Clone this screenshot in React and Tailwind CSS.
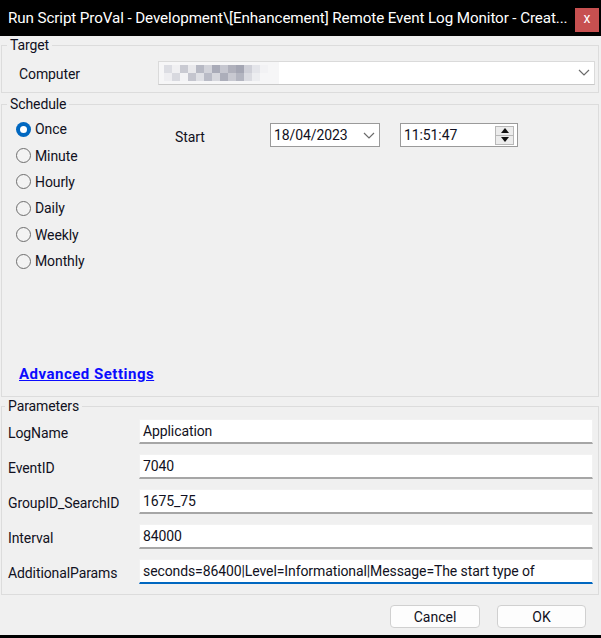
import React from 'react';

const font = { fontFamily: 'Roboto, "Liberation Sans", sans-serif' };

const mosaic = [
  ['#dcdde3', '#f0f0f2', '#c9cad2', '#e9e9ec', '#b7b9c4', '#d2d3da', '#a9abb8', '#c6c7d0', '#b0b1bc', '#a4a6b3', '#cfd0d8', '#e4e5ea', '#f2f2f4'],
  ['#eeeef1', '#d8d9df', '#f3f3f5', '#c4c5ce', '#dfe0e5', '#b9bbc6', '#d6d7dd', '#acaeba', '#c8c9d1', '#b3b5c0', '#dadbe1', '#ecedf0', '#f6f6f7'],
];

const Chevron = ({ className }) => (
  <svg width="12" height="7" viewBox="0 0 12 7" className={className}>
    <path d="M1 1 L6 6 L11 1" fill="none" stroke="#6b6b6b" strokeWidth="1.2" />
  </svg>
);

const Radio = ({ checked, label }) => (
  <div className="flex items-center h-[26.4px]">
    {checked ? (
      <div className="w-[15px] h-[15px] rounded-full bg-[#0067c0] flex items-center justify-center">
        <div className="w-[7px] h-[7px] rounded-full bg-white" />
      </div>
    ) : (
      <div className="w-[15px] h-[15px] rounded-full border border-[#6e6e6e] bg-[#f3f3f3]" />
    )}
    <span className="ml-[4px] text-[14px] tracking-[-0.1px] text-[#111122] leading-[18px]">{label}</span>
  </div>
);

const Param = ({ label, value, focused }) => (
  <div className="flex items-center h-[25px]">
    <span className="w-[137px] pl-[6px] text-[14px] tracking-[-0.1px] text-[#111122] leading-[18px] mt-[3px]">{label}</span>
    <div
      className={`w-[454px] h-[25px] bg-white border border-[#f2f2f2] flex items-center pl-[3px] text-[14px] tracking-[-0.1px] text-[#111122] ${
        focused ? 'border-b-2 border-b-[#0067c0]' : 'border-b-2 border-b-[#a6a6a6]'
      }`}
    >
      {value}
    </div>
  </div>
);

export default function App() {
  return (
    <div className="w-[601px] h-[638px] bg-[#f0f0f0] flex flex-col border-b-[3px] border-black" style={font}>
      <div className="h-[36px] bg-black flex items-center justify-between pl-[8px] pr-[2px] shrink-0">
        <span className="text-white text-[15.2px] leading-[20px] whitespace-nowrap tracking-[-0.1px]">
          Run Script ProVal - Development\[Enhancement] Remote Event Log Monitor - Creat...
        </span>
        <div className="w-[24px] h-[24px] bg-[#c75050] flex items-center justify-center text-white text-[14px] leading-none pb-[3px] mt-[3px]">
          x
        </div>
      </div>

      <fieldset className="ml-[1px] w-[598px] border border-[#dcdcdc]">
        <legend className="ml-[5px] px-[3px] text-[14px] tracking-[-0.1px] leading-[18px] text-[#111122]">Target</legend>
        <div className="flex items-center pt-[6px] pb-[7px]">
          <span className="w-[156px] pl-[17px] text-[14px] tracking-[-0.1px] text-[#111122] mt-[4px]">Computer</span>
          <div className="w-[437px] h-[24px] bg-white border border-[#dadada] border-b-[#c8c8c8] flex items-center justify-between pr-[4px]">
            <div className="h-full w-[120px] bg-[#f6f6f7] flex flex-col justify-center pl-[5px]">
              {mosaic.map((row, r) => (
                <div key={r} className="flex">
                  {row.map((c, i) => (
                    <div key={i} className="w-[8px] h-[8px]" style={{ backgroundColor: c }} />
                  ))}
                </div>
              ))}
            </div>
            <Chevron />
          </div>
        </div>
      </fieldset>

      <fieldset className="ml-[1px] w-[598px] mt-[2px] border border-[#dcdcdc]">
        <legend className="ml-[5px] px-[3px] text-[14px] tracking-[-0.1px] leading-[18px] text-[#111122]">Schedule</legend>
        <div className="h-[283px] flex flex-col">
          <div className="flex pt-[3px]">
            <div className="pl-[14px] w-[173px] flex flex-col">
              <Radio checked label="Once" />
              <Radio label="Minute" />
              <Radio label="Hourly" />
              <Radio label="Daily" />
              <Radio label="Weekly" />
              <Radio label="Monthly" />
            </div>
            <div className="flex items-center h-[24px] mt-[7px]">
              <span className="w-[95px] text-[14px] tracking-[-0.1px] text-[#111122] mt-[4px]">Start</span>
              <div className="w-[110px] h-[24px] bg-white border border-[#9a9a9a] flex items-center justify-between pl-[3px] pr-[4px] text-[14px] tracking-[-0.1px] text-[#111122]">
                <span>18/04/2023</span>
                <Chevron />
              </div>
              <div className="ml-[20px] w-[118px] h-[24px] bg-white border border-[#9a9a9a] flex items-center justify-between pl-[3px] pr-[3px] text-[14px] tracking-[-0.1px] text-[#111122]">
                <span>11:51:47</span>
                <div className="w-[19px] h-[19px] flex flex-col border border-[#b8b8b8]">
                  <div className="flex-1 bg-[#ececec] border-b border-[#b8b8b8] flex items-center justify-center">
                    <svg width="8" height="5" viewBox="0 0 8 5"><path d="M0 5 L4 0 L8 5 Z" fill="#111" /></svg>
                  </div>
                  <div className="flex-1 bg-[#ececec] flex items-center justify-center">
                    <svg width="8" height="5" viewBox="0 0 8 5"><path d="M0 0 L4 5 L8 0 Z" fill="#111" /></svg>
                  </div>
                </div>
              </div>
            </div>
          </div>
          <div className="mt-auto pb-[10px] pl-[17px]">
            <span className="text-[15px] tracking-[0.5px] leading-[18px] font-bold text-[#0b0bff] underline">Advanced Settings</span>
          </div>
        </div>
      </fieldset>

      <fieldset className="ml-[1px] w-[598px] border border-[#dcdcdc]">
        <legend className="ml-[3px] px-[3px] text-[14px] tracking-[-0.1px] leading-[18px] text-[#111122]">Parameters</legend>
        <div className="flex flex-col gap-[10px] pt-[4px] pb-[10px]">
          <Param label="LogName" value="Application" />
          <Param label="EventID" value="7040" />
          <Param label="GroupID_SearchID" value="1675_75" />
          <Param label="Interval" value="84000" />
          <Param label="AdditionalParams" value="seconds=86400|Level=Informational|Message=The start type of" focused />
        </div>
      </fieldset>

      <div className="flex justify-end gap-[17px] pr-[15px] mt-[10px]">
        <button className="w-[90px] h-[23px] bg-[#fdfdfd] border border-[#d0d0d0] rounded-[4px] text-[14px] text-[#111122] leading-none">
          Cancel
        </button>
        <button className="w-[89px] h-[23px] bg-[#fdfdfd] border border-[#d0d0d0] rounded-[4px] text-[14px] text-[#111122] leading-none">
          OK
        </button>
      </div>
    </div>
  );
}
